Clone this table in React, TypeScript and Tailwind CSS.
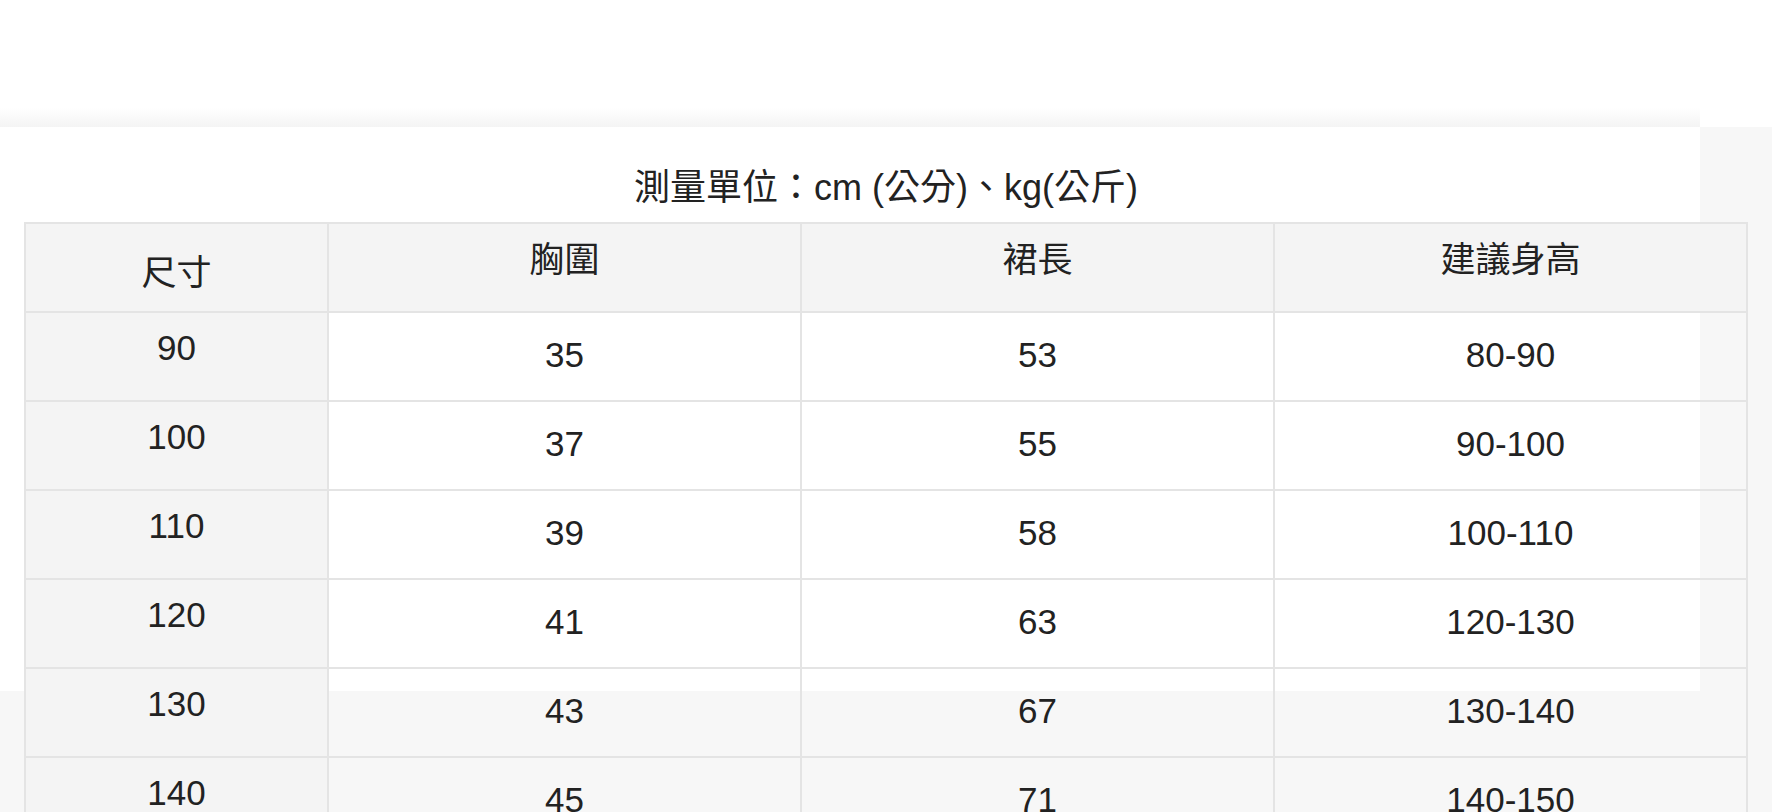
const rows = [
  { size: "90", chest: "35", length: "53", height: "80-90" },
  { size: "100", chest: "37", length: "55", height: "90-100" },
  { size: "110", chest: "39", length: "58", height: "100-110" },
  { size: "120", chest: "41", length: "63", height: "120-130" },
  { size: "130", chest: "43", length: "67", height: "130-140" },
  { size: "140", chest: "45", length: "71", height: "140-150" },
];

const font = "font-['Liberation_Sans','Noto_Sans_CJK_TC',sans-serif]";

export default function App() {
  return (
    <main className={`relative min-h-[812px] w-full overflow-hidden bg-white text-[#222] ${font}`}>
      {/* page backdrop: panel with a soft top shadow */}
      <div className="absolute inset-0 flex flex-col">
        <div className="flex h-[127px] shrink-0">
          <div className="flex w-[1700px] flex-col justify-end">
            <div className="h-[19px] bg-[linear-gradient(to_bottom,#ffffff,#f4f4f4)]" />
          </div>
          <div className="flex-1 bg-white" />
        </div>
        <div className="flex h-[564px] shrink-0">
          <div className="w-[1700px] bg-white" />
          <div className="flex-1 bg-[#f7f7f7]" />
        </div>
        <div className="flex-1 bg-[#f7f7f7]" />
      </div>

      <section className="relative ml-[24px] w-[1724px] pt-[168px]">
        <h1 className="mb-[14px] h-[40px] text-center text-[36px] leading-[40px] font-normal">
          測量單位：cm (公分)、kg(公斤)
        </h1>

        <table className="w-[1724px] table-fixed border-collapse text-center text-[35px] leading-[40px]">
          <colgroup>
            <col className="w-[303px]" />
            <col />
            <col />
            <col />
          </colgroup>
          <thead>
            <tr className="h-[89px] bg-[#f4f4f4]">
              <th className="border-2 border-[#e4e4e4] pt-[11px] align-middle font-normal">尺寸</th>
              <th className="border-2 border-[#e4e4e4] pb-[15px] align-middle font-normal">胸圍</th>
              <th className="border-2 border-[#e4e4e4] pb-[15px] align-middle font-normal">裙長</th>
              <th className="border-2 border-[#e4e4e4] pb-[15px] align-middle font-normal">建議身高</th>
            </tr>
          </thead>
          <tbody>
            {rows.map((r) => (
              <tr key={r.size} className="h-[89px]">
                <td className="border-2 border-[#e4e4e4] bg-[#f4f4f4] pb-[17px] align-middle">{r.size}</td>
                <td className="border-2 border-[#e4e4e4] pb-[4px] align-middle">{r.chest}</td>
                <td className="border-2 border-[#e4e4e4] pb-[4px] align-middle">{r.length}</td>
                <td className="border-2 border-[#e4e4e4] pb-[4px] align-middle">{r.height}</td>
              </tr>
            ))}
          </tbody>
        </table>
      </section>
    </main>
  );
}
